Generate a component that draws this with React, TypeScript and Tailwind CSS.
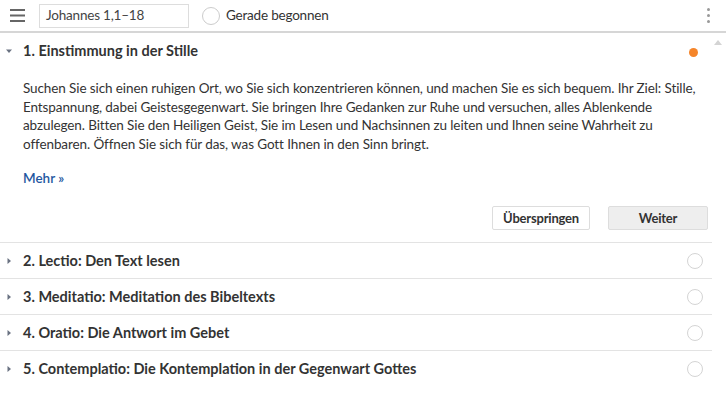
import React from 'react'

const steps = [
  '2. Lectio: Den Text lesen',
  '3. Meditatio: Meditation des Bibeltexts',
  '4. Oratio: Die Antwort im Gebet',
  '5. Contemplatio: Die Kontemplation in der Gegenwart Gottes',
]

const Caret: React.FC<{ open?: boolean }> = ({ open }) => (
  <svg width="6" height="6" viewBox="0 0 6 6" className="shrink-0 text-gray-500">
    {open ? <path d="M0 1.5h6L3 5z" fill="currentColor" /> : <path d="M1.5 0v6L5 3z" fill="currentColor" />}
  </svg>
)

const App: React.FC = () => {
  return (
    <div className="relative h-[409px] w-[726px] overflow-hidden bg-white text-[#333]" style={{ fontFamily: 'Lato, "Noto Sans", sans-serif' }}>
      {/* scrollbar arrow */}
      <div className="absolute right-[4px] top-[40px]">
        <svg width="8" height="5" viewBox="0 0 8 5"><path d="M0 5L4 0l4 5z" fill="#d4d4d4" /></svg>
      </div>

      <header className="flex h-[33px] items-center border-b-2 border-[#d6d6d6] pl-[10px] pr-[16px]">
        <svg width="15" height="13" viewBox="0 0 15 13" className="shrink-0">
          <rect y="0" width="15" height="2" fill="#666" />
          <rect y="5.5" width="15" height="2" fill="#666" />
          <rect y="11" width="15" height="2" fill="#666" />
        </svg>
        <div className="ml-[14px] flex h-[24px] w-[150px] items-center border border-[#ddd] px-[6px] text-[13.5px] tracking-[-0.2px] text-[#444]">
          Johannes 1,1–18
        </div>
        <div className="ml-[13px] h-[18px] w-[18px] rounded-full border-[1.5px] border-[#ccc]" />
        <span className="ml-[6px] text-[13.5px] tracking-[-0.2px] text-[#333]">Gerade begonnen</span>
        <div className="ml-auto flex flex-col gap-[3px]">
          <span className="h-[3px] w-[3px] rounded-full bg-[#999]" />
          <span className="h-[3px] w-[3px] rounded-full bg-[#999]" />
          <span className="h-[3px] w-[3px] rounded-full bg-[#999]" />
        </div>
      </header>

      <div className="w-[712px]">
        <section className="border-b border-[#e3e3e3]">
          <div className="flex h-[36px] items-center pl-[6px] pr-[14px]">
            <Caret open />
            <h2 className="ml-[11px] text-[14.5px] font-bold text-[#333]">1. Einstimmung in der Stille</h2>
            <span className="ml-auto mt-[2px] h-[9px] w-[9px] rounded-full bg-[#f5852a]" />
          </div>
          <div className="pl-[23px] pr-[10px] pt-[10px]">
            <p className="text-[13.5px] leading-[18.5px] tracking-[-0.1px] text-[#333]">
              Suchen Sie sich einen ruhigen Ort, wo Sie sich konzentrieren können, und machen Sie es sich bequem. Ihr Ziel: Stille, Entspannung, dabei Geistesgegenwart. Sie bringen Ihre Gedanken zur Ruhe und versuchen, alles Ablenkende abzulegen. Bitten Sie den Heiligen Geist, Sie im Lesen und Nachsinnen zu leiten und Ihnen seine Wahrheit zu offenbaren. Öffnen Sie sich für das, was Gott Ihnen in den Sinn bringt.
            </p>
            <a className="mt-[15px] block text-[13.5px] font-semibold text-[#1f57a0]">Mehr »</a>
          </div>
          <div className="flex justify-end gap-[18px] pb-[12px] pr-[4px] pt-[18px]">
            <button className="h-[24px] w-[98px] rounded-[2px] border border-[#ddd] bg-white text-[13px] font-bold tracking-[-0.2px] text-[#333]">Überspringen</button>
            <button className="h-[24px] w-[100px] rounded-[2px] border border-[#ddd] bg-[#eee] text-[13px] font-bold tracking-[-0.2px] text-[#333]">Weiter</button>
          </div>
        </section>

        {steps.map((s, i) => (
          <section key={s} className={`flex h-[36px] items-center pl-[6px] pr-[9px] ${i < steps.length - 1 ? 'border-b border-[#e3e3e3]' : ''}`}>
            <Caret />
            <h2 className="ml-[11px] text-[14.5px] font-bold text-[#333]">{s}</h2>
            <span className="ml-auto h-[16px] w-[16px] rounded-full border-[1.5px] border-[#d4d4d4]" />
          </section>
        ))}
      </div>
    </div>
  )
}

export default App
